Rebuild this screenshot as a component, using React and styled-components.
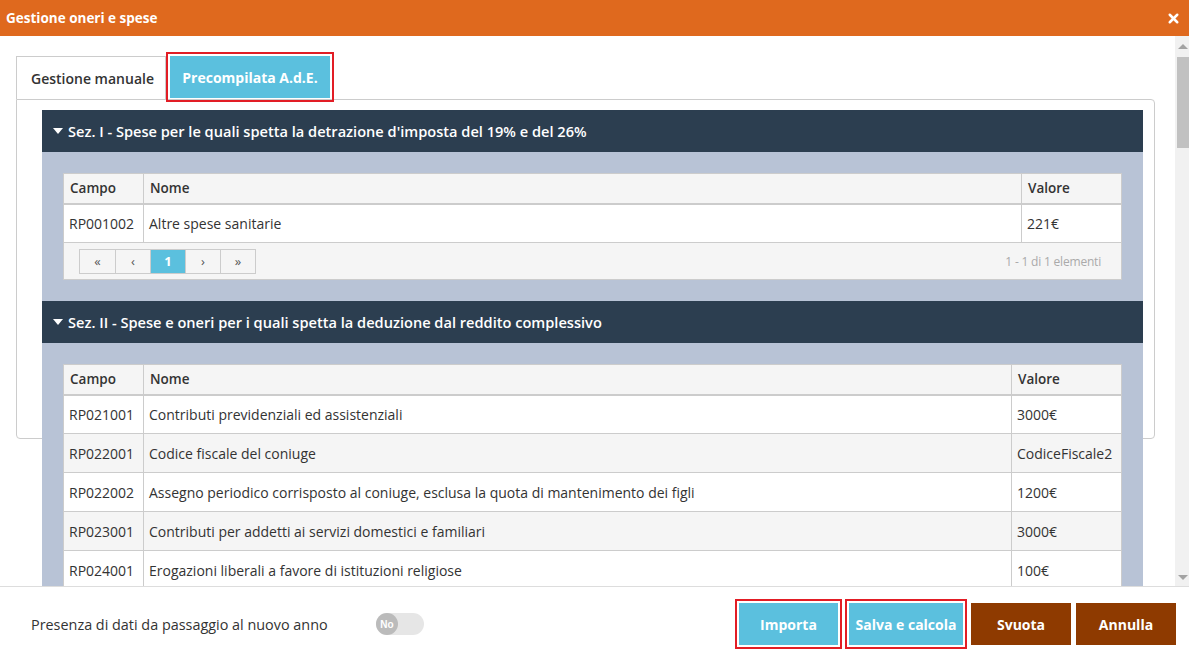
import React, { useState } from 'react';
import styled, { createGlobalStyle } from 'styled-components';
import { X } from 'lucide-react';

const GlobalStyle = createGlobalStyle`
  html, body { margin: 0; padding: 0; }
  body {
    font-family: "Open Sans", "Noto Sans", sans-serif;
    color: #333;
    background: #fff;
  }
  * { box-sizing: border-box; }
`;

const Modal = styled.div`
  display: flex;
  flex-direction: column;
  height: 100vh;
  overflow: hidden;
`;

const Header = styled.div`
  height: 36px;
  flex: none;
  display: flex;
  align-items: center;
  justify-content: space-between;
  padding: 0 8px 0 6px;
  background: #df691e;
  color: #fff;
  font-size: 13.5px;
  font-weight: 700;
`;

const CloseButton = styled.button`
  border: 0;
  background: none;
  padding: 0;
  color: #fff;
  display: flex;
  cursor: pointer;
`;

const Main = styled.div`
  flex: 1;
  min-height: 0;
  display: flex;
`;

const Content = styled.div`
  flex: 1;
  min-width: 0;
  overflow: hidden;
  padding: 20px 20px 0 16px;
`;

const Scrollbar = styled.div`
  width: 14px;
  flex: none;
  background: #f1f1f1;
  display: flex;
  flex-direction: column;
  align-items: flex-end;
  padding: 8px 0 6px;
`;

const ScrollArrow = styled.div`
  width: 0;
  height: 0;
  margin-right: 1px;
  border-left: 5px solid transparent;
  border-right: 5px solid transparent;
  ${p => p.$down
    ? 'border-top: 5px solid #a3a3a3; margin-top: auto;'
    : 'border-bottom: 5px solid #a3a3a3;'}
`;

const ScrollThumb = styled.div`
  width: 12px;
  height: 91px;
  margin-top: 8px;
  background: #c1c1c1;
`;

const TabList = styled.div`
  display: flex;
  align-items: flex-end;
  height: 43px;
`;

const Tab = styled.button`
  width: ${p => (p.$active ? '160px' : '150px')};
  height: ${p => (p.$active ? '42px' : '43px')};
  padding: 0 0 0 ${p => (p.$active ? '0' : '3px')};
  margin-left: ${p => (p.$active ? '4px' : '0')};
  margin-bottom: ${p => (p.$active ? '1px' : '0')};
  border: ${p => (p.$active ? '0' : '1px solid #ccc')};
  border-bottom: 0;
  background: ${p => (p.$active ? '#5bc0de' : '#fff')};
  color: ${p => (p.$active ? '#fff' : '#333')};
  font-family: inherit;
  font-size: 14px;
  font-weight: ${p => (p.$active ? 700 : 600)};
  outline: ${p => (p.$active ? '2px solid #e21d25' : 'none')};
  outline-offset: 2px;
  cursor: pointer;
`;

const TabPanel = styled.div`
  height: 340px;
  border: 1px solid #ccc;
  border-radius: 0 4px 4px 4px;
  padding: 10px 11px 0 25px;
`;

const Section = styled.div`
  background: #b8c3d6;
`;

const SectionHeader = styled.div`
  height: 42px;
  display: flex;
  align-items: center;
  gap: 5px;
  padding-left: 11px;
  background: #2c3e50;
  color: #fff;
  font-size: 14.6px;
  font-weight: 600;
  cursor: pointer;
`;

const SectionBody = styled.div`
  padding: 21px;
`;

const Table = styled.table`
  width: 100%;
  border-collapse: collapse;
  background: #fff;
  font-size: 14px;
  color: #333;
`;

const Th = styled.th`
  height: 30px;
  padding: 0 6px;
  text-align: left;
  font-size: 13.5px;
  font-weight: 600;
  background: #f5f5f5;
  border: 1px solid #ccc;
  border-bottom-width: 2px;
  width: ${p => p.$width || 'auto'};
`;

const Row = styled.tr`
  background: ${p => (p.$striped ? '#f5f5f5' : '#fff')};
`;

const Td = styled.td`
  height: 39px;
  padding: 0 5px;
  border: 1px solid #ccc;
  white-space: nowrap;
`;

const PagerCell = styled.td`
  height: 37px;
  padding: 0 20px 0 15px;
  background: #f5f5f5;
  border: 1px solid #ccc;
`;

const PagerBar = styled.div`
  display: flex;
  align-items: center;
  justify-content: space-between;
`;

const Pager = styled.div`
  display: flex;
  border: 1px solid #ccc;
`;

const PageButton = styled.button`
  width: 35px;
  height: 23px;
  border: 0;
  border-left: ${p => (p.$first ? '0' : '1px solid #ccc')};
  background: ${p => (p.$active ? '#5bc0de' : '#f5f5f5')};
  color: ${p => (p.$active ? '#fff' : '#555')};
  font-family: inherit;
  font-size: 13px;
  font-weight: ${p => (p.$active ? 700 : 400)};
  padding: 0;
  cursor: pointer;
`;

const PagerInfo = styled.span`
  font-size: 12px;
  color: #aaa;
  letter-spacing: -0.2px;
`;

const Footer = styled.div`
  height: 75px;
  flex: none;
  display: flex;
  align-items: center;
  padding: 0 13px 0 31px;
  border-top: 1px solid #ddd;
`;

const FieldLabel = styled.span`
  width: 345px;
  font-size: 14.4px;
  color: #333;
`;

const Toggle = styled.button`
  width: 48px;
  height: 22px;
  border: 0;
  border-radius: 11px;
  background: #e6e6e6;
  padding: 0;
  display: flex;
  align-items: center;
  cursor: pointer;
`;

const ToggleKnob = styled.span`
  width: 22px;
  height: 22px;
  border-radius: 50%;
  background: #bbb;
  color: #fff;
  font-size: 10px;
  font-weight: 700;
  display: flex;
  align-items: center;
  justify-content: center;
`;

const Actions = styled.div`
  margin-left: auto;
  display: flex;
  gap: 5px;
`;

const ActionButton = styled.button`
  height: 42px;
  width: ${p => p.$width || '100px'};
  padding: 0;
  margin: ${p => (p.$flagged ? '0 3px' : '0')};
  border: 0;
  background: ${p => (p.$primary ? '#5bc0de' : '#8e3a00')};
  color: #fff;
  font-family: inherit;
  font-size: 14px;
  font-weight: 700;
  outline: ${p => (p.$flagged ? '2px solid #e21d25' : 'none')};
  outline-offset: 2px;
  cursor: pointer;
`;

function Caret() {
  return (
      <svg width="10" height="6" viewBox="0 0 10 6">
          <path d="M0 0h10L5 6z" fill="#fff" />
      </svg>
  );
}

const sezioneUno = [
  { campo: 'RP001002', nome: 'Altre spese sanitarie', valore: '221€' },
];

const sezioneDue = [
  { campo: 'RP021001', nome: 'Contributi previdenziali ed assistenziali', valore: '3000€' },
  { campo: 'RP022001', nome: 'Codice fiscale del coniuge', valore: 'CodiceFiscale2' },
  { campo: 'RP022002', nome: 'Assegno periodico corrisposto al coniuge, esclusa la quota di mantenimento dei figli', valore: '1200€' },
  { campo: 'RP023001', nome: 'Contributi per addetti ai servizi domestici e familiari', valore: '3000€' },
  { campo: 'RP024001', nome: 'Erogazioni liberali a favore di istituzioni religiose', valore: '100€' },
];

function DataSection({ title, rows, valoreWidth, pager }) {
  const [ open, setOpen ] = useState(true);
  return (
      <Section>
          <SectionHeader onClick={ () => setOpen(!open) }>
              <Caret />
              {title}
          </SectionHeader>
          {open && (
              <SectionBody>
                  <Table>
                      <thead>
                          <tr>
                              <Th $width="80px">Campo</Th>
                              <Th>Nome</Th>
                              <Th $width={ valoreWidth }>Valore</Th>
                          </tr>
                      </thead>
                      <tbody>
                          {rows.map((r, i) => (
                              <Row key={ r.campo } $striped={ i % 2 === 1 }>
                                  <Td>{r.campo}</Td>
                                  <Td>{r.nome}</Td>
                                  <Td>{r.valore}</Td>
                              </Row>
                          ))}
                          {pager && (
                              <tr>
                                  <PagerCell colSpan={ 3 }>
                                      <PagerBar>
                                          <Pager>
                                              <PageButton $first>«</PageButton>
                                              <PageButton>‹</PageButton>
                                              <PageButton $active>1</PageButton>
                                              <PageButton>›</PageButton>
                                              <PageButton>»</PageButton>
                                          </Pager>
                                          <PagerInfo>1 - {rows.length} di {rows.length} elementi</PagerInfo>
                                      </PagerBar>
                                  </PagerCell>
                              </tr>
                          )}
                      </tbody>
                  </Table>
              </SectionBody>
          )}
      </Section>
  );
}

export default function App() {
  const [ tab, setTab ] = useState('ade');
  return (
      <>
          <GlobalStyle />
          <Modal>
              <Header>
                  <span>Gestione oneri e spese</span>
                  <CloseButton aria-label="Chiudi">
                      <X size={ 15 } strokeWidth={ 4 } />
                  </CloseButton>
              </Header>
              <Main>
                  <Content>
                      <TabList>
                          <Tab $active={ tab === 'manuale' } onClick={ () => setTab('manuale') }>Gestione manuale</Tab>
                          <Tab $active={ tab === 'ade' } onClick={ () => setTab('ade') }>Precompilata A.d.E.</Tab>
                      </TabList>
                      <TabPanel>
                          <DataSection
                              title="Sez. I - Spese per le quali spetta la detrazione d'imposta del 19% e del 26%"
                              rows={ sezioneUno }
                              valoreWidth="100px"
                              pager
                          />
                          <DataSection
                              title="Sez. II - Spese e oneri per i quali spetta la deduzione dal reddito complessivo"
                              rows={ sezioneDue }
                              valoreWidth="110px"
                          />
                      </TabPanel>
                  </Content>
                  <Scrollbar>
                      <ScrollArrow />
                      <ScrollThumb />
                      <ScrollArrow $down />
                  </Scrollbar>
              </Main>
              <Footer>
                  <FieldLabel>Presenza di dati da passaggio al nuovo anno</FieldLabel>
                  <Toggle aria-label="Presenza di dati">
                      <ToggleKnob>No</ToggleKnob>
                  </Toggle>
                  <Actions>
                      <ActionButton $primary $flagged $width="99px">Importa</ActionButton>
                      <ActionButton $primary $flagged $width="114px">Salva e calcola</ActionButton>
                      <ActionButton>Svuota</ActionButton>
                      <ActionButton>Annulla</ActionButton>
                  </Actions>
              </Footer>
          </Modal>
      </>
  );
}
